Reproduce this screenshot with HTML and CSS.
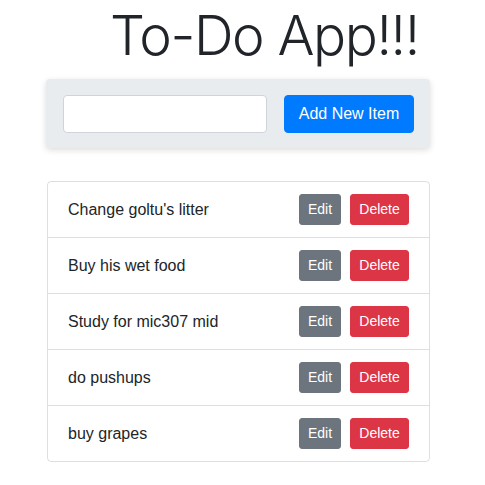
FILE: index.html
```html
<!DOCTYPE html>
<html>
<head>
<meta charset="utf-8">
<link rel="stylesheet" href="styles.css">
</head>
<body>
<div class="page">
  <h1 class="title">To-Do App!!!</h1>
  <div class="panel">
    <input class="field" type="text">
    <button class="btn btn-primary">Add New Item</button>
  </div>
  <ul class="list">
    <li class="item"><span class="label">Change goltu's litter</span><span class="actions"><button class="btn-sm btn-edit">Edit</button><button class="btn-sm btn-delete">Delete</button></span></li>
    <li class="item"><span class="label">Buy his wet food</span><span class="actions"><button class="btn-sm btn-edit">Edit</button><button class="btn-sm btn-delete">Delete</button></span></li>
    <li class="item"><span class="label">Study for mic307 mid</span><span class="actions"><button class="btn-sm btn-edit">Edit</button><button class="btn-sm btn-delete">Delete</button></span></li>
    <li class="item"><span class="label">do pushups</span><span class="actions"><button class="btn-sm btn-edit">Edit</button><button class="btn-sm btn-delete">Delete</button></span></li>
    <li class="item"><span class="label">buy grapes</span><span class="actions"><button class="btn-sm btn-edit">Edit</button><button class="btn-sm btn-delete">Delete</button></span></li>
  </ul>
</div>
</body>
</html>
```
FILE: styles.css
```css
* { box-sizing: border-box; }
body {
  margin: 0;
  font-family: "Liberation Sans", Arial, sans-serif;
  color: #212529;
  background: #fff;
}
.page {
  width: 383px;
  margin-left: 47px;
}
.title {
  margin: 0 0 9px 0;
  padding: 2px 0 1px 63px;
  font-family: "Inter", "Liberation Sans", sans-serif;
  font-weight: 300;
  font-size: 55px;
  line-height: 67px;
  letter-spacing: -1.4px;
  color: #212529;
  white-space: nowrap;
}
.panel {
  display: flex;
  align-items: center;
  gap: 17px;
  margin-left: -1px;
  padding: 16px 16px 15px 17px;
  background: #e9ecef;
  border-radius: 4px;
  box-shadow: 0 2px 6px rgba(0,0,0,0.14);
}
.field {
  width: 204px;
  height: 38px;
  border: 1px solid #ced4da;
  border-radius: 4px;
  background: #fff;
  padding: 6px 12px;
  font-size: 16px;
}
.btn {
  font-family: "Liberation Sans", Arial, sans-serif;
  border: 1px solid transparent;
  border-radius: 4px;
  cursor: pointer;
}
.btn-primary {
  width: 130px;
  height: 38px;
  background: #007bff;
  border-color: #007bff;
  color: #fff;
  font-size: 16px;
  line-height: 24px;
  padding: 6px 8px;
}
.list {
  list-style: none;
  margin: 33px 0 0 0;
  padding: 0;
  border: 1px solid rgba(0,0,0,0.125);
  border-radius: 4px;
}
.item {
  display: flex;
  justify-content: space-between;
  align-items: center;
  padding: 12px 20px;
  border-bottom: 1px solid rgba(0,0,0,0.125);
  font-size: 16px;
  line-height: 24px;
}
.item:last-child { border-bottom: none; }
.label { color: #212529; }
.actions {
  display: flex;
  gap: 9px;
}
.btn-sm {
  font-family: "Liberation Sans", Arial, sans-serif;
  font-size: 14px;
  line-height: 21px;
  height: 31px;
  padding: 4px 0;
  border: 1px solid transparent;
  border-radius: 3px;
  color: #fff;
  text-align: center;
}
.btn-edit { width: 42px; background: #6c757d; border-color: #6c757d; }
.btn-delete { width: 59px; background: #dc3545; border-color: #dc3545; }
```
